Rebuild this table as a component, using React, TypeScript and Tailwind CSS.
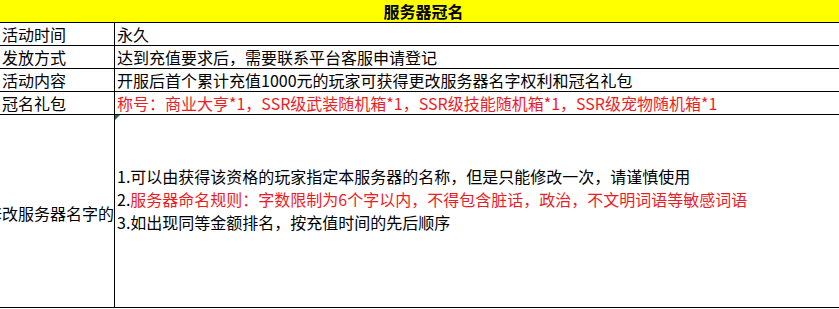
import React from "react";

const font = { fontFamily: '"Noto Sans CJK SC", "Noto Sans", sans-serif' };

function Row({ label, children }: { label: string; children: React.ReactNode }) {
  return (
    <div className="grid grid-cols-[115px_1fr] h-[23px] border-b border-black">
      <div className="border-r border-black pl-[2px] flex items-center leading-none whitespace-nowrap overflow-hidden">{label}</div>
      <div className="pl-[2px] flex items-center leading-none whitespace-nowrap overflow-hidden">{children}</div>
    </div>
  );
}

export default function App() {
  return (
    <div className="w-[839px] h-[309px] bg-white text-[16px] text-black" style={font}>
      <div className="h-[23px] bg-[#ffff00] border-b border-black flex items-center justify-center font-bold text-[16px] leading-none pl-[8px]">
        服务器冠名
      </div>
      <Row label="活动时间">永久</Row>
      <Row label="发放方式">达到充值要求后，需要联系平台客服申请登记</Row>
      <Row label="活动内容">开服后首个累计充值1000元的玩家可获得更改服务器名字权利和冠名礼包</Row>
      <Row label="冠名礼包">
        <span className="text-[#ee1c25]">称号：商业大亨*1，SSR级武装随机箱*1，SSR级技能随机箱*1，SSR级宠物随机箱*1</span>
      </Row>
      <div className="grid grid-cols-[115px_1fr] h-[193px] border-b border-black">
        <div className="border-r border-black flex items-center justify-start overflow-hidden whitespace-nowrap leading-none pt-[4px]">
          <span className="ml-[-14px]">修改服务器名字的</span>
        </div>
        <div className="relative pl-[2px] flex flex-col justify-center leading-[23px] whitespace-nowrap overflow-hidden">
          <div className="absolute left-0 top-0 w-0 h-0 border-t-[5px] border-t-[#217346] border-r-[5px] border-r-transparent" />
          <div>1.可以由获得该资格的玩家指定本服务器的名称，但是只能修改一次，请谨慎使用</div>
          <div>
            2.<span className="text-[#ee1c25]">服务器命名规则：字数限制为6个字以内，不得包含脏话，政治，不文明词语等敏感词语</span>
          </div>
          <div>3.如出现同等金额排名，按充值时间的先后顺序</div>
          <div>&nbsp;</div>
        </div>
      </div>
    </div>
  );
}
